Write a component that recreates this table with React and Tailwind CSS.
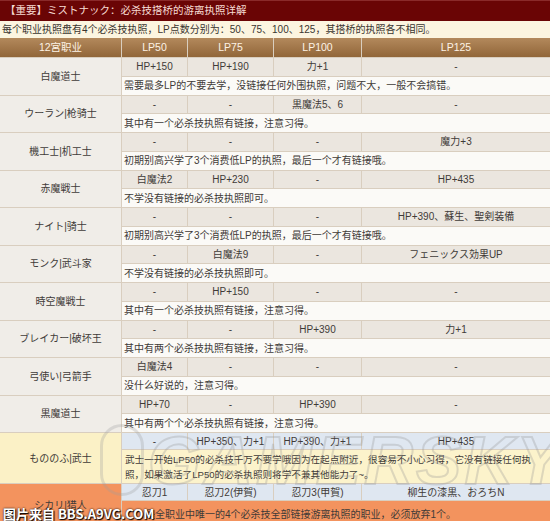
import React from "react";

const rows = [
  { name: "白魔道士", v: ["HP+150", "HP+190", "力+1", "-"], d: "需要最多LP的不要去学，没链接任何外围执照，问题不大，一般不会搞错。" },
  { name: "ウーラン|枪骑士", v: ["-", "-", "黒魔法5、6", "-"], d: "其中有一个必杀技执照有链接，注意习得。" },
  { name: "機工士|机工士", v: ["-", "-", "-", "魔力+3"], d: "初期别高兴学了3个消费低LP的执照，最后一个才有链接哦。" },
  { name: "赤魔戦士", v: ["白魔法2", "HP+230", "-", "HP+435"], d: "不学没有链接的必杀技执照即可。" },
  { name: "ナイト|骑士", v: ["-", "-", "-", "HP+390、蘇生、聖剣装備"], d: "初期别高兴学了3个消费低LP的执照，最后一个才有链接哦。" },
  { name: "モンク|武斗家", v: ["-", "白魔法9", "-", "フェニックス効果UP"], d: "不学没有链接的必杀技执照即可。" },
  { name: "時空魔戦士", v: ["-", "HP+150", "-", "-"], d: "其中有一个必杀技执照有链接，注意习得。" },
  { name: "ブレイカー|破坏王", v: ["-", "-", "HP+390", "力+1"], d: "其中有两个必杀技执照有链接，注意习得。" },
  { name: "弓使い|弓箭手", v: ["白魔法4", "-", "-", "-"], d: "没什么好说的，注意习得。" },
  { name: "黒魔道士", v: ["HP+70", "-", "HP+390", "-"], d: "其中有两个个必杀技执照有链接，注意习得。" },
];

export default function App() {
  return (
    <div className="relative w-[550px] h-[521px] overflow-hidden bg-white font-['Liberation_Sans','Noto_Sans_CJK_SC',sans-serif] text-[10px] text-[#3f3b38]">
      <div className="h-[21px] flex items-center pl-[5px] bg-[#6a0505] border-t border-[#8a2a2a] text-[#f6dcd4] text-[10.5px]">
        【重要】ミストナック：必杀技搭桥的游离执照详解
      </div>
      <div className="h-[17px] flex items-center pl-[2px] bg-[#fcf5e0] text-[#3a3530]">
        每个职业执照盘有4个必杀技执照，LP点数分别为：50、75、100、125，其搭桥的执照各不相同。
      </div>
      <div className="grid grid-cols-[121px_65px_85px_87px_188px] gap-px bg-[#d9cebf]">
        {["12宮职业", "LP50", "LP75", "LP100", "LP125"].map((h) => (
          <div key={h} className="h-[19px] flex items-center justify-center bg-gradient-to-b from-[#b3895c] to-[#916639] text-[#fdf3e6] text-[10.5px]">
            {h}
          </div>
        ))}
        {rows.map((r) => (
          <React.Fragment key={r.name}>
            <div className="row-span-2 flex items-center justify-center bg-[#f0ede8]">{r.name}</div>
            {r.v.map((v, i) => (
              <div key={i} className="h-[17.5px] flex items-center justify-center bg-[#ebe6df] whitespace-nowrap">
                {v}
              </div>
            ))}
            <div className="col-span-4 h-[18px] flex items-center pl-[2px] bg-[#fbfaf7] whitespace-nowrap">{r.d}</div>
          </React.Fragment>
        ))}
        <div className="row-span-2 flex items-center justify-center bg-[#fbf1c6]">もののふ|武士</div>
        {["-", "HP+350、力+1", "HP+390、力+1", "HP+435"].map((v, i) => (
          <div key={i} className="h-[16px] flex items-center justify-center bg-[#dfe7f1] whitespace-nowrap">
            {v}
          </div>
        ))}
        <div className="col-span-4 h-[33px] flex flex-col justify-center pl-[3px] bg-[#fcf3cb] leading-[15px] whitespace-nowrap text-[9.6px]">
          <span>武士一开始LP50的必杀技千万不要学哦因为在起点附近，很容易不小心习得，它没有链接任何执</span>
          <span>照，如果激活了LP50的必杀执照则将学不兼其他能力了~。</span>
        </div>
        <div className="row-span-2 flex items-center justify-center bg-[#f3935e]">シカリ|猎人</div>
        {["忍刀1", "忍刀2(伊賀)", "忍刀3(甲賀)", "柳生の漆黒、おろちN"].map((v, i) => (
          <div key={i} className="h-[16px] flex items-center justify-center bg-[#dfe7f1] whitespace-nowrap">
            {v}
          </div>
        ))}
        <div className="col-span-4 h-[26px] flex items-center pl-[23px] bg-[#f3935e] whitespace-nowrap">
          是全职业中唯一的4个必杀技全部链接游离执照的职业，必须放弃1个。
        </div>
      </div>

      <div className="absolute left-[100px] top-[424px] pointer-events-none flex items-center">
        <div className="w-[44px] h-[72px] rounded-full border-[3px] border-[rgba(160,160,160,0.3)]" />
        <div className="ml-[4px] italic font-bold text-[68px] leading-none tracking-[3px] text-transparent [-webkit-text-stroke:2px_rgba(150,150,150,0.3)] font-['Liberation_Sans',sans-serif]">
          GAMERSKY
        </div>
      </div>

      <div className="absolute left-[3px] bottom-[1px] text-white text-[13px] font-bold leading-none [text-shadow:0_0_2px_#000,1px_1px_1px_#000] font-['Noto_Sans_CJK_SC',sans-serif]">
        图片来自 BBS.A9VG.COM
      </div>
    </div>
  );
}
